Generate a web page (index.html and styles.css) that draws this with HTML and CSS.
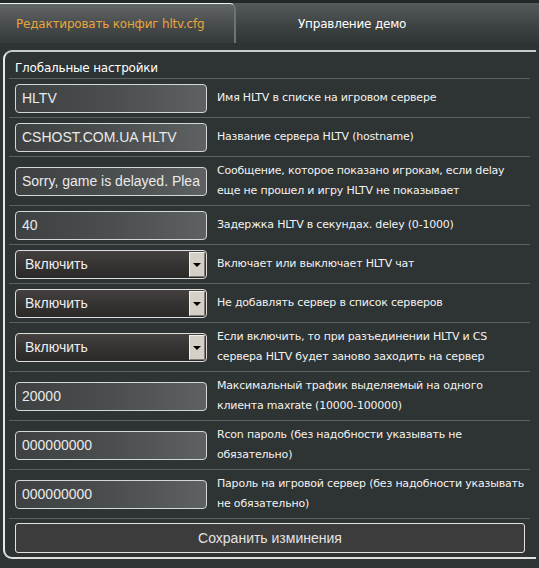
FILE: index.html
```html
<!DOCTYPE html>
<html lang="ru">
<head>
<meta charset="utf-8">
<link rel="stylesheet" href="styles.css">
</head>
<body>
<div class="tabs">
  <div class="tab active">Редактировать конфиг hltv.cfg</div>
  <div class="tab">Управление демо</div>
</div>
<div class="panel">
  <div class="head">Глобальные настройки</div>
  <div class="row">
    <input class="field" type="text" value="HLTV">
    <div class="label">Имя HLTV в списке на игровом сервере</div>
  </div>
  <div class="row">
    <input class="field" type="text" value="CSHOST.COM.UA HLTV">
    <div class="label">Название сервера HLTV (hostname)</div>
  </div>
  <div class="row">
    <input class="field" type="text" value="Sorry, game is delayed. Please wait">
    <div class="label">Сообщение, которое показано игрокам, если delay<br>еще не прошел и игру HLTV не показывает</div>
  </div>
  <div class="row">
    <input class="field" type="text" value="40">
    <div class="label">Задержка HLTV в секундах. deley (0-1000)</div>
  </div>
  <div class="row">
    <div class="select"><select><option>Включить</option></select><span class="arrow"></span></div>
    <div class="label">Включает или выключает HLTV чат</div>
  </div>
  <div class="row">
    <div class="select"><select><option>Включить</option></select><span class="arrow"></span></div>
    <div class="label">Не добавлять сервер в список серверов</div>
  </div>
  <div class="row">
    <div class="select"><select><option>Включить</option></select><span class="arrow"></span></div>
    <div class="label">Если включить, то при разъединении HLTV и CS<br>сервера HLTV будет заново заходить на сервер</div>
  </div>
  <div class="row">
    <input class="field" type="text" value="20000">
    <div class="label">Максимальный трафик выделяемый на одного<br>клиента maxrate (10000-100000)</div>
  </div>
  <div class="row">
    <input class="field" type="text" value="000000000">
    <div class="label">Rcon пароль (без надобности указывать не<br>обязательно)</div>
  </div>
  <div class="row">
    <input class="field" type="text" value="000000000">
    <div class="label">Пароль на игровой сервер (без надобности указывать<br>не обязательно)</div>
  </div>
  <div class="actions">
    <button class="save" type="button">Сохранить изминения</button>
  </div>
</div>
</body>
</html>
```

FILE: styles.css
```css
html, body {
  margin: 0;
  padding: 0;
  background: #2e3333;
  overflow: hidden;
}
body {
  width: 539px;
  height: 568px;
  border-top: 3px solid #222727;
  box-sizing: border-box;
  font-family: "DejaVu Sans", sans-serif;
}
.tabs {
  display: flex;
  height: 40px;
  background: linear-gradient(to bottom, #565a5a 0%, #3c4141 60%, #303535 100%);
}
.tab {
  font-size: 12px;
  color: #ffffff;
  line-height: 42px;
  white-space: nowrap;
  letter-spacing: -0.2px;
  overflow: hidden;
}
.tab.active {
  width: 218px;
  padding-left: 16px;
  color: #e7a43c;
  border-top: 1px solid #f2f2f2;
  border-right: 2px solid #6e7373;
  border-top-right-radius: 6px;
  background: linear-gradient(to bottom, #626666 0%, #474b4b 55%, #343939 100%);
  line-height: 41px;
}
.tab + .tab {
  padding-left: 62px;
}
.panel {
  margin: 7px 0 0 3px;
  width: 533px;
  border-left: 2px solid #e8e8e8;
  border-top: 2px solid #c8cccc;
  border-bottom: 2px solid #e0e0e0;
  border-top-left-radius: 9px;
  border-bottom-left-radius: 9px;
  padding: 0 0 1px 4px;
  box-sizing: border-box;
}
.head {
  color: #ffffff;
  font-size: 12px;
  line-height: 14px;
  padding: 9px 0 3px 6px;
  border-bottom: 1px solid #5b6060;
  margin-right: 6px;
  letter-spacing: -0.2px;
}
.row {
  display: flex;
  align-items: center;
  gap: 10px;
  padding: 4px 0 4px 6px;
  margin-right: 6px;
  border-bottom: 1px solid #5b6060;
  min-height: 30px;
}
.field {
  flex: none;
  width: 192px;
  height: 29px;
  box-sizing: border-box;
  margin: 0;
  padding: 0 6px;
  border: 1px solid #d6d6d6;
  border-radius: 4px;
  background: linear-gradient(to right, #3d4141 0%, #4a4e4e 50%, #5d6161 100%);
  color: #eaeaea;
  font-family: "Liberation Sans", Arial, sans-serif;
  font-size: 14px;
  outline: none;
  overflow: hidden;
}
.select {
  flex: none;
  position: relative;
  width: 192px;
  height: 29px;
}
.select select {
  appearance: none;
  -webkit-appearance: none;
  width: 100%;
  height: 100%;
  margin: 0;
  padding: 0 0 0 9px;
  box-sizing: border-box;
  border: 1px solid #dedede;
  border-radius: 4px;
  background: linear-gradient(to bottom, #454141 0%, #363333 50%, #2b2828 100%);
  color: #eeeeee;
  font-family: "Liberation Sans", Arial, sans-serif;
  font-size: 14px;
  outline: none;
}
.arrow {
  position: absolute;
  top: 2px;
  right: 2px;
  width: 16px;
  height: 25px;
  box-sizing: border-box;
  background: #d4d0c8;
  border-top: 1px solid #f4f2ee;
  border-left: 1px solid #f4f2ee;
  border-right: 1px solid #7e7b76;
  border-bottom: 1px solid #7e7b76;
}
.arrow::after {
  content: "";
  position: absolute;
  left: 3px;
  top: 10px;
  border-left: 4px solid transparent;
  border-right: 4px solid transparent;
  border-top: 4px solid #000000;
}
.label {
  color: #f2f2f2;
  font-size: 11px;
  line-height: 20px;
  white-space: nowrap;
  letter-spacing: -0.2px;
}
.actions {
  padding: 4px 6px 3px 6px;
}
.save {
  display: block;
  width: 510px;
  height: 30px;
  margin: 0;
  border: 1px solid #e2e2e2;
  border-radius: 3px;
  background: #3c3c3c;
  color: #e2e2e2;
  font-family: "Liberation Sans", Arial, sans-serif;
  font-size: 14px;
}
```
